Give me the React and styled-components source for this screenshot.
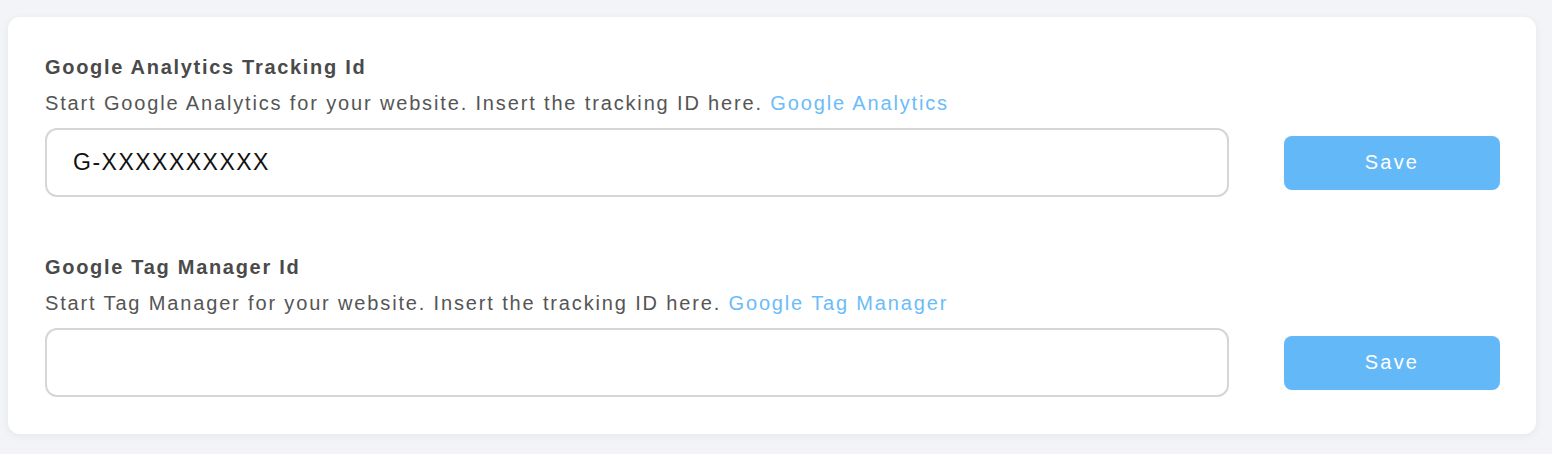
import React, { useState } from 'react';
import styled, { createGlobalStyle } from 'styled-components';

const GlobalStyle = createGlobalStyle`
    body {
        margin: 0;
        background: #f3f4f7;
        font-family: "Liberation Sans", Arial, sans-serif;
    }
`;

const Page = styled.div`
    padding: 17px 16px 20px 8px;
`;

const Card = styled.div`
    background: #ffffff;
    border-radius: 12px;
    box-shadow: 0 2px 10px rgba(20, 30, 70, 0.06);
    padding: 38px 36px 37px 37px;
    display: flex;
    flex-direction: column;
    gap: 58px;
`;

const Section = styled.div`
    display: flex;
    flex-direction: column;
`;

const Title = styled.h3`
    margin: 0;
    font-size: 20px;
    font-weight: 700;
    color: #4a4a4a;
    letter-spacing: 1.7px;
    line-height: 24px;
`;

const Description = styled.p`
    margin: 12px 0 13px;
    font-size: 20px;
    color: #555555;
    letter-spacing: 1.85px;
    line-height: 24px;

    a {
        color: #6bbcf7;
        text-decoration: none;
    }
`;

const Row = styled.div`
    display: flex;
    align-items: center;
    gap: 55px;
`;

const Input = styled.input`
    flex: 1;
    height: 69px;
    box-sizing: border-box;
    border: 2px solid #d6d6d6;
    border-radius: 12px;
    padding: 0 26px;
    font-family: "Liberation Sans", Arial, sans-serif;
    font-size: 23px;
    letter-spacing: 1.5px;
    color: #111111;
    outline: none;
    background: #ffffff;
`;

const SaveButton = styled.button`
    width: 216px;
    height: 54px;
    border: none;
    border-radius: 8px;
    background: #63b8f8;
    color: #ffffff;
    font-family: "Liberation Sans", Arial, sans-serif;
    font-size: 20px;
    letter-spacing: 2.2px;
    cursor: pointer;
`;

const fields = [
    {
        id: 'ga',
        title: 'Google Analytics Tracking Id',
        text: 'Start Google Analytics for your website. Insert the tracking ID here.',
        link: 'Google Analytics',
        value: 'G-XXXXXXXXXX',
    },
    {
        id: 'gtm',
        title: 'Google Tag Manager Id',
        text: 'Start Tag Manager for your website. Insert the tracking ID here.',
        link: 'Google Tag Manager',
        value: '',
    },
];

function TrackingField({ field }) {
    const [value, setValue] = useState(field.value);
    return (
        <Section>
            <Title>{field.title}</Title>
            <Description>
                {field.text} <a href="#" onClick={(e) => e.preventDefault()}>{field.link}</a>
            </Description>
            <Row>
                <Input value={value} onChange={(e) => setValue(e.target.value)} />
                <SaveButton>Save</SaveButton>
            </Row>
        </Section>
    );
}

export default function App() {
    return (
        <>
            <GlobalStyle />
            <Page>
                <Card>
                    {fields.map((f) => (
                        <TrackingField key={f.id} field={f} />
                    ))}
                </Card>
            </Page>
        </>
    );
}
